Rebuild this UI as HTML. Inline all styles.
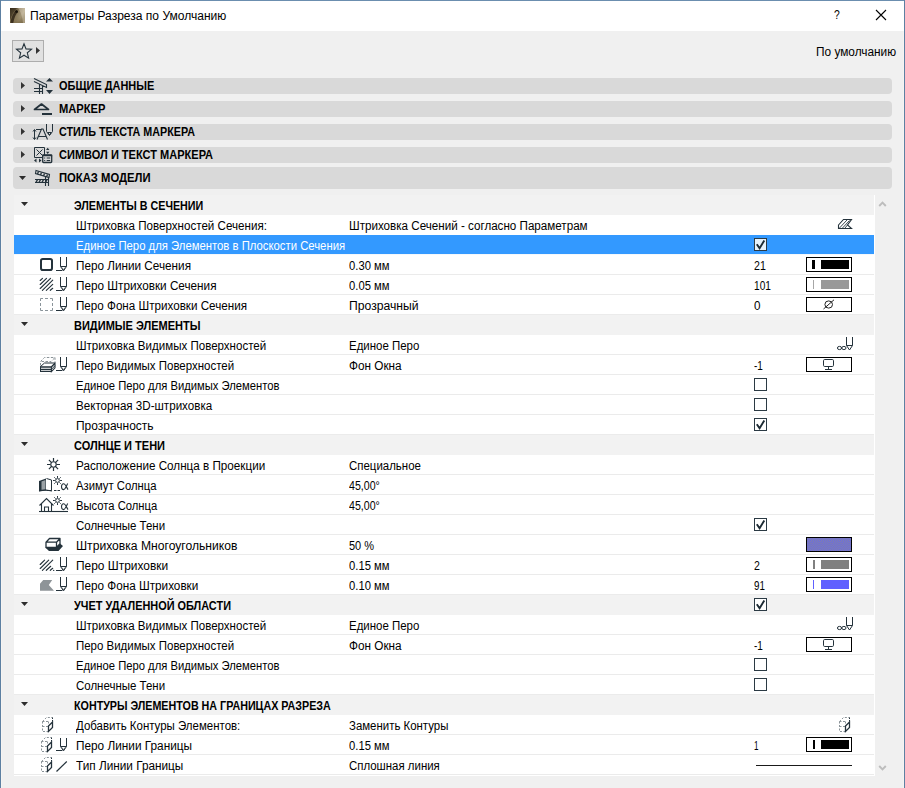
<!DOCTYPE html>
<html><head><meta charset="utf-8"><title>Параметры Разреза по Умолчанию</title>
<style>
*{box-sizing:border-box;margin:0;padding:0}
html,body{width:905px;height:788px;overflow:hidden;background:#f0f0f0}
body{font-family:"Liberation Sans",sans-serif;font-size:12px;line-height:14px;color:#000;position:relative}
.ab{position:absolute}
i{display:block;position:absolute;font-style:normal}
span,b{display:inline-block;white-space:nowrap;transform-origin:0 0}
#bt{position:absolute;left:0;top:0;width:905px;height:1px;background:#6b8eaf}
#bl{position:absolute;left:0;top:0;width:1px;height:788px;background:#5d80a2}
#br{position:absolute;left:904px;top:0;width:1px;height:788px;background:#5d80a2}
#title{position:absolute;left:1px;top:1px;width:903px;height:30px;background:#fff}
#title .t{position:absolute;left:29px;top:8px}
#appico{position:absolute;left:9px;top:7px;width:15px;height:15px}
#el,#er{position:absolute;top:31px;width:1px;height:757px;background:#f6f4f2}#el{left:1px}#er{left:903px}
#star{position:absolute;left:12px;top:40px;width:32px;height:22px;border:1px solid #adadad;background:#e1e1e1}
.def{position:absolute;left:816px;top:45px}
.sec{position:absolute;left:13px;width:879px;height:16px;background:#d9d9d9;border-radius:4px}
.sec b{position:absolute;left:46px;top:1px}
.sec b.b5{top:4px}
.sec svg{position:absolute;left:18px;top:-2px}
.tr{left:8px;top:4px;width:4px;height:7px;background:#333;clip-path:polygon(0 0,100% 50%,0 100%)}
.td{left:6px;top:9px;width:7px;height:4px;background:#2d2d2d;clip-path:polygon(0 0,100% 0,50% 100%)}
#list{position:absolute;left:14px;top:195px;width:861px;height:581px;background:#fff;overflow:hidden}
.row{position:relative;height:20px;width:860px;border-bottom:1px solid #ebebeb}
.row.grp{background:#f2f2f2;border-bottom-color:#f2f2f2}
.row.sel{background:#3399ff;color:#fff;border-bottom-color:#f4f8fc}
.lb{position:absolute;left:62px;top:4px}
.grp .lb{left:60px}
.vl{position:absolute;left:335px;top:4px}
.nm{position:absolute;left:740px;top:4px}
.tri{left:7px;top:7px;width:7px;height:4px;background:#2d2d2d;clip-path:polygon(0 0,100% 0,50% 100%)}
.chk{position:absolute;left:740px;top:3px;width:13px;height:13px;border:1px solid #2b3a44;background:#fff}
.sel .chk{background:#e5f1fb}
.chk svg{position:absolute;left:0;top:0}
.pen{position:absolute;left:792px;top:2px;width:46px;height:15px;border:1px solid #000;background:#fff}
.pen i{top:2px;height:9px}
.pen.fillsw{background:repeating-conic-gradient(#6a6ae0 0 25%,#8282aa 0 50%) 0 0/2px 2px}
.row.nb{border-bottom-color:#fff}
#sb{position:absolute;left:875px;top:195px;width:17px;height:581px;background:#f0f0f0}
</style></head><body>
<div id="title">
<svg id="appico" viewBox="0 0 15 15"><defs><linearGradient id="ag" x1="0" y1="0" x2="1" y2="0.600"><stop offset="0" stop-color="#3d321f"/><stop offset="0.450" stop-color="#7d6e50"/><stop offset="0.800" stop-color="#c4b89c"/><stop offset="1" stop-color="#a39679"/></linearGradient><linearGradient id="ah" x1="0" y1="0" x2="0" y2="1"><stop offset="0" stop-color="#8a7a5a" stop-opacity="0"/><stop offset="1" stop-color="#7a6a48" stop-opacity="0.900"/></linearGradient></defs><rect width="15" height="15" fill="url(#ag)"/><rect width="15" height="15" fill="url(#ah)"/><path d="M9 1.500C11 5 12.500 9 13 15H15V0H8Z" fill="#d9cfb8" opacity="0.450"/><path d="M0 0H7L3 5L0 12Z" fill="#2e2515" opacity="0.550"/><path d="M1.800 15C2.800 9.500 4.800 5 7.200 3" fill="none" stroke="#2a2114" stroke-width="2.800" opacity="0.800"/><circle cx="6.600" cy="3.600" r="1.400" fill="#120d07" opacity="0.900"/></svg>
<span class="t" style="transform:scaleX(1.0026);">Параметры Разреза по Умолчанию</span>
<span class="ab" style="left:833px;top:7px;font-size:13px;transform:scaleX(.8)">?</span>
<svg class="ab" style="left:874px;top:8px" width="12" height="12" viewBox="0 0 12 12"><path d="M1 1L11 11M11 1L1 11" stroke="#000" stroke-width="1.100" fill="none"/></svg>
</div>
<div id="el"></div><div id="er"></div><div id="bt"></div><div id="bl"></div><div id="br"></div>
<div id="star"><svg class="ab" style="left:2px;top:1px" width="18" height="18" viewBox="0 0 18 18"><path d="M9 1.800L11 6.900L16.500 7.300L12.300 10.800L13.600 16.100L9 13.200L4.400 16.100L5.700 10.800L1.500 7.300L7 6.900Z" fill="none" stroke="#24323b" stroke-width="1.100"/></svg><i class="tr" style="left:23px;top:6px"></i></div>
<span class="def" style="transform:scaleX(0.9870);">По умолчанию</span>

<div class="sec" style="top:78px"><i class="tr"></i>
<svg width="24" height="20" viewBox="0 0 24 20"><path d="M3 2.500L15.500 8.500V11.500L3 5.500M8.500 8.500V18M11.500 9.500V18M3 12.500H11.500M3 15.500H11.500" fill="none" stroke="#24323b" stroke-width="1.100"/><path d="M15 5.500L18.500 2L22 5.500ZM15 14L22 14L18.500 18Z" fill="#24323b"/></svg>
<b style="transform:scaleX(0.9124);">ОБЩИЕ ДАННЫЕ</b></div>
<div class="sec" style="top:101px"><i class="tr"></i>
<svg width="24" height="20" viewBox="0 0 24 20"><path d="M3.500 10.500L10.500 5L17.500 10.500Z" fill="none" stroke="#24323b" stroke-width="1.700" stroke-linejoin="round"/><path d="M11 15H21" stroke="#24323b" stroke-width="2"/></svg>
<b style="transform:scaleX(0.9300);">МАРКЕР</b></div>
<div class="sec" style="top:124px"><i class="tr"></i>
<svg width="24" height="20" viewBox="0 0 24 20"><g transform="translate(-1,0)"><path d="M4.500 8V17M3 9.500L4.500 7.500L6 9.500M3 15.500L4.500 17.500L6 15.500" fill="none" stroke="#24323b"/><path d="M7 17.500L11.500 7H13L17.500 17.500M8.500 14.500H16M6 7.500H11" fill="none" stroke="#24323b" stroke-width="1.100"/><path d="M16.500 2V9.500L19.500 13.500L22.500 9.500V2M17.800 10.500H21.200L19.500 13Z" fill="none" stroke="#24323b"/></g></svg>
<b style="transform:scaleX(0.8955);">СТИЛЬ ТЕКСТА МАРКЕРА</b></div>
<div class="sec" style="top:147px"><i class="tr"></i>
<svg width="24" height="20" viewBox="0 0 24 20"><path d="M3.500 2.500H13.500V12.500H3.500ZM5.500 4.500L11.500 10.500M11.500 4.500L5.500 10.500" fill="none" stroke="#24323b"/><path d="M15 5L16.700 2.800L18.400 5ZM15 6.800L18.400 6.800L16.700 9Z" fill="#24323b"/><path d="M3 15.500L5.500 13.500V17.500ZM10.500 15.500L8 13.500V17.500Z" fill="#24323b"/><rect x="11.700" y="10" width="9" height="7.500" rx="0.800" fill="#d9d9d9" stroke="#24323b" stroke-width="1.300"/><path d="M11.200 10.500H21.200" stroke="#24323b" stroke-width="1.500"/><path d="M13.200 13H14.200M15.700 13H19.200M13.200 15.500H14.200M15.700 15.500H19.200" stroke="#24323b" fill="none"/></svg>
<b style="transform:scaleX(0.9191);">СИМВОЛ И ТЕКСТ МАРКЕРА</b></div>
<div class="sec" style="top:167px;height:22px"><i class="td"></i>
<svg style="top:1px" width="24" height="20" viewBox="0 0 24 20"><path d="M5 2.500L18.500 6.500L18 9.500L4.500 5.500Z" fill="none" stroke="#24323b" stroke-width="1.100"/><path d="M7.500 3.500L6.500 6M10.500 4.500L9.500 7M13.500 5.500L12.500 8M16.500 6.500L15.500 9" stroke="#24323b" stroke-width="1.300"/><path d="M4 11.500H17.500M4 14.500H17.500M14.500 9V18M17.500 9.500V18" stroke="#24323b" stroke-width="1.100" fill="none"/><path d="M5 14L6.500 12M8 14L9.500 12M11 14L12.500 12M14.500 14L16 12" stroke="#24323b" stroke-width="1.300"/></svg>
<b class="b5" style="transform:scaleX(0.9377);">ПОКАЗ МОДЕЛИ</b></div>

<div id="list">
<div class="row grp"><i class="tri"></i><b class="lb" style="transform:scaleX(0.8941);">ЭЛЕМЕНТЫ В СЕЧЕНИИ</b></div>
<div class="row nb"><span class="lb" style="transform:scaleX(0.9667);">Штриховка Поверхностей Сечения:</span><span class="vl" style="transform:scaleX(0.9684);">Штриховка Сечений - согласно Параметрам</span><svg class="ab" style="left:822px;top:2px" width="18" height="14" viewBox="0 0 18 14"><path d="M2.500 8L7.500 2.500H15.500L11.500 8L15.500 11.500H2.500Z" fill="none" stroke="#24323b" stroke-width="1.100"/><path d="M3.500 11L11 3M6.500 11L13.500 3.500M11.500 8L9 11" stroke="#24323b" stroke-width="0.9" fill="none"/></svg></div>
<div class="row sel"><span class="lb" style="transform:scaleX(0.9427);">Единое Перо для Элементов в Плоскости Сечения</span><div class="chk"><svg width="11" height="11" viewBox="0 0 11 11"><path d="M1.800 5.200L4.600 9.200L9.300 1.500" fill="none" stroke="#1c2a33" stroke-width="1.900"/></svg></div></div>
<div class="row"><svg class="ab" style="left:0px;top:0" width="62" height="20" viewBox="0 0 62 20"><rect x="27" y="4" width="11" height="11" rx="1.8" fill="none" stroke="#24323b" stroke-width="2"/><path d="M46.5 2V11.500L49.5 15.900L52.5 11.500V2M46.5 11.500H52.5" fill="none" stroke="#24323b"/><path d="M48.0 12.500L49.5 15L51.0 12.500" fill="none" stroke="#24323b" stroke-width="0.600"/><path d="M42.0 15.500H48.3" stroke="#24323b"/></svg><span class="lb" style="transform:scaleX(0.9777);">Перо Линии Сечения</span><span class="vl" style="transform:scaleX(0.9374);">0.30 мм</span><span class="nm" style="transform:scaleX(0.8833);">21</span><div class="pen"><i style="left:5px;width:3px;background:#000"></i><i style="left:14px;width:28px;background:#000"></i></div></div>
<div class="row"><svg class="ab" style="left:0px;top:0" width="62" height="20" viewBox="0 0 62 20"><path d="M26.200 5.500L28.500 3.400M26.200 9.500L32.500 3.400M26.200 13.500L36.500 3.400M28.400 15.300L38.700 5.200M32.300 15.300L38.700 9.300M36.300 15.300L38.700 13.300" stroke="#24323b" stroke-width="1.150" stroke-linecap="round" fill="none"/><path d="M46.5 2V11.500L49.5 15.900L52.5 11.500V2M46.5 11.500H52.5" fill="none" stroke="#24323b"/><path d="M48.0 12.500L49.5 15L51.0 12.500" fill="none" stroke="#24323b" stroke-width="0.600"/><path d="M42.0 15.500H48.3" stroke="#24323b"/></svg><span class="lb" style="transform:scaleX(0.9774);">Перо Штриховки Сечения</span><span class="vl" style="transform:scaleX(0.9374);">0.05 мм</span><span class="nm" style="transform:scaleX(0.8437);">101</span><div class="pen"><i style="left:6px;width:1px;background:#a6a6a6"></i><i style="left:14px;width:28px;background:#999"></i></div></div>
<div class="row"><svg class="ab" style="left:0px;top:0" width="62" height="20" viewBox="0 0 62 20"><rect x="26.5" y="3.5" width="12" height="12" fill="none" stroke="#8a949a" stroke-dasharray="5 2 3 2" stroke-dashoffset="2.500"/><path d="M46.5 2V11.500L49.5 15.900L52.5 11.500V2M46.5 11.500H52.5" fill="none" stroke="#24323b"/><path d="M48.0 12.500L49.5 15L51.0 12.500" fill="none" stroke="#24323b" stroke-width="0.600"/><path d="M42.0 15.500H48.3" stroke="#24323b"/></svg><span class="lb" style="transform:scaleX(0.9706);">Перо Фона Штриховки Сечения</span><span class="vl" style="transform:scaleX(1.0140);">Прозрачный</span><span class="nm" style="transform:scaleX(0.9720);">0</span><div class="pen"><svg class="ab" style="left:15px;top:0" width="14" height="13" viewBox="0 0 14 13"><ellipse cx="6.700" cy="6.500" rx="3.800" ry="3.600" fill="none" stroke="#222"/><path d="M1.500 11L12 1.800" stroke="#222"/></svg></div></div>
<div class="row grp"><i class="tri"></i><b class="lb" style="transform:scaleX(0.9180);">ВИДИМЫЕ ЭЛЕМЕНТЫ</b></div>
<div class="row"><span class="lb" style="transform:scaleX(0.9620);">Штриховка Видимых Поверхностей</span><span class="vl" style="transform:scaleX(0.9542);">Единое Перо</span><svg class="ab" style="left:822px;top:0" width="18" height="20" viewBox="0 0 18 20"><path d="M10.500 2V10.500L13.500 15L16.500 10.500V2M10.500 10.500H16.500" fill="none" stroke="#24323b"/><ellipse cx="3.500" cy="13" rx="2.100" ry="1.600" fill="none" stroke="#24323b"/><ellipse cx="7.900" cy="13" rx="2.100" ry="1.600" fill="none" stroke="#24323b"/></svg></div>
<div class="row"><svg class="ab" style="left:0px;top:0" width="62" height="20" viewBox="0 0 62 20"><path d="M26.500 10.500V6.500L30.500 2.500H41V7.500M27.500 6.500H37L40.500 3M37 7.500V8" fill="none" stroke="#8a9398" stroke-dasharray="2.500 1.500"/><path d="M26.500 11.500L30.500 8H41L37.300 11.500" fill="none" stroke="#24323b"/><path d="M26 12H37.500M26 14.300H37.500M26 16.400H37.500" fill="none" stroke="#24323b" stroke-width="1.300"/><path d="M26.500 11.500V16.500" stroke="#24323b"/><path d="M37.400 12L41 8.300V12.800L37.400 16.600Z" fill="none" stroke="#24323b" stroke-width="1.100"/><path d="M37.500 14.300L41 10.600" stroke="#24323b"/><path d="M46.5 2V11.500L49.5 15.900L52.5 11.500V2M46.5 11.500H52.5" fill="none" stroke="#24323b"/><path d="M48.0 12.500L49.5 15L51.0 12.500" fill="none" stroke="#24323b" stroke-width="0.600"/><path d="M42.0 15.500H48.3" stroke="#24323b"/></svg><span class="lb" style="transform:scaleX(0.9558);">Перо Видимых Поверхностей</span><span class="vl" style="transform:scaleX(0.9803);">Фон Окна</span><span class="nm" style="transform:scaleX(0.8340);">-1</span><div class="pen"><svg class="ab" style="left:15px;top:0" width="14" height="13" viewBox="0 0 14 13"><rect x="1.500" y="1.500" width="10" height="7" rx="1.200" fill="none" stroke="#24323b"/><path d="M6.500 8.500V11.500M3 11.500H10" stroke="#24323b" fill="none"/></svg></div></div>
<div class="row"><span class="lb" style="transform:scaleX(0.9364);">Единое Перо для Видимых Элементов</span><div class="chk"></div></div>
<div class="row"><span class="lb" style="transform:scaleX(0.9670);">Векторная 3D-штриховка</span><div class="chk"></div></div>
<div class="row"><span class="lb" style="transform:scaleX(0.9970);">Прозрачность</span><div class="chk"><svg width="11" height="11" viewBox="0 0 11 11"><path d="M1.800 5.200L4.600 9.200L9.300 1.500" fill="none" stroke="#1c2a33" stroke-width="1.900"/></svg></div></div>
<div class="row grp"><i class="tri"></i><b class="lb" style="transform:scaleX(0.9175);">СОЛНЦЕ И ТЕНИ</b></div>
<div class="row"><svg class="ab" style="left:0px;top:0" width="62" height="20" viewBox="0 0 62 20"><circle cx="39.500" cy="9.500" r="2.700" fill="none" stroke="#24323b" stroke-width="1.1"/><path d="M39.500 3V6.500M39.500 12.500V16M33 9.500H36.500M42.500 9.500H46M34.900 4.900L37.300 7.300M41.700 11.700L44.100 14.100M44.100 4.900L41.700 7.300M34.900 14.100L37.300 11.700" stroke="#24323b" stroke-width="1.200" fill="none"/></svg><span class="lb" style="transform:scaleX(0.9734);">Расположение Солнца в Проекции</span><span class="vl" style="transform:scaleX(0.9545);">Специальное</span></div>
<div class="row"><svg class="ab" style="left:0px;top:0" width="62" height="20" viewBox="0 0 62 20"><path d="M25 6L32 3.500V15.500L25 16.200Z" fill="#24323b"/><path d="M27.500 6.500L31.500 5V14.500L27.500 14.800Z" fill="#9aa1a5"/><path d="M32.500 3.500L37.500 5V15.500L32.500 15.500" fill="#fff" stroke="#24323b"/><path d="M25 16L32 15L38 16" fill="none" stroke="#24323b" stroke-width="1.2"/><circle cx="43.5" cy="5.5" r="1.9" fill="#fff" stroke="#24323b"/><path d="M43.5 1.0V2.9M43.5 8.1V10.0M39.0 5.5H40.9M46.1 5.5H48.0M40.3 2.3L41.6 3.6M45.4 7.4L46.7 8.7M46.7 2.3L45.4 3.6M40.3 8.7L41.6 7.4" stroke="#24323b" fill="none"/><path d="M53.7 8.6C52.2 11.6 51.0 14.6 49.7 14.6C48.0 14.6 47.5 13.2 47.5 11.8C47.5 10.1 48.2 8.799999999999999 49.7 8.799999999999999C51.2 8.799999999999999 52.2 11.6 54.0 14.6" fill="none" stroke="#24323b" stroke-width="1.1"/><path d="M40 15.500H47" stroke="#24323b" stroke-dasharray="2.500 1" fill="none"/></svg><span class="lb" style="transform:scaleX(0.9395);">Азимут Солнца</span><span class="vl" style="transform:scaleX(0.8843);">45,00°</span></div>
<div class="row"><svg class="ab" style="left:0px;top:0" width="62" height="20" viewBox="0 0 62 20"><path d="M25.500 10.500L32.500 3.500L39.500 10.500M27.500 9V16.500M37.500 9V16.500M30.500 16.500V12H34.500V16.500" fill="none" stroke="#24323b" stroke-width="1.1"/><path d="M25 16.500H54" stroke="#24323b" stroke-width="1.1"/><circle cx="43.5" cy="5.5" r="1.9" fill="#fff" stroke="#24323b"/><path d="M43.5 1.0V2.9M43.5 8.1V10.0M39.0 5.5H40.9M46.1 5.5H48.0M40.3 2.3L41.6 3.6M45.4 7.4L46.7 8.7M46.7 2.3L45.4 3.6M40.3 8.7L41.6 7.4" stroke="#24323b" fill="none"/><path d="M53.7 8.6C52.2 11.6 51.0 14.6 49.7 14.6C48.0 14.6 47.5 13.2 47.5 11.8C47.5 10.1 48.2 8.799999999999999 49.7 8.799999999999999C51.2 8.799999999999999 52.2 11.6 54.0 14.6" fill="none" stroke="#24323b" stroke-width="1.1"/></svg><span class="lb" style="transform:scaleX(0.9355);">Высота Солнца</span><span class="vl" style="transform:scaleX(0.8843);">45,00°</span></div>
<div class="row"><span class="lb" style="transform:scaleX(0.9565);">Солнечные Тени</span><div class="chk"><svg width="11" height="11" viewBox="0 0 11 11"><path d="M1.800 5.200L4.600 9.200L9.300 1.500" fill="none" stroke="#1c2a33" stroke-width="1.900"/></svg></div></div>
<div class="row"><svg class="ab" style="left:0px;top:0" width="62" height="20" viewBox="0 0 62 20"><path d="M31.300 12.500L35 16H44.500L49 11L46 8.500L42.500 12.500Z" fill="#24323b"/><path d="M32 7.200H42.500V12.500H32ZM32 7.200L35.500 3.500H46L42.500 7.200M46 3.500V8.800L42.500 12.500" fill="#fff" stroke="#24323b" stroke-width="1.300" stroke-linejoin="round"/></svg><span class="lb" style="transform:scaleX(1.0100);">Штриховка Многоугольников</span><span class="vl" style="transform:scaleX(0.9174);">50 %</span><div class="pen fillsw"></div></div>
<div class="row"><svg class="ab" style="left:0px;top:0" width="62" height="20" viewBox="0 0 62 20"><path d="M26.200 9.500L30.600 5.200M26.200 13.500L34.700 5.200M28.400 15.300L38.700 5.200M32.300 15.300L36.700 11.300M36.300 15.300L38.700 13.300" stroke="#24323b" stroke-width="1.150" stroke-linecap="round" fill="none"/><circle cx="39.700" cy="15.400" r="0.650" fill="#24323b"/><path d="M46.5 2V11.500L49.5 15.900L52.5 11.500V2M46.5 11.500H52.5" fill="none" stroke="#24323b"/><path d="M48.0 12.500L49.5 15L51.0 12.500" fill="none" stroke="#24323b" stroke-width="0.600"/><path d="M42.0 15.500H48.3" stroke="#24323b"/></svg><span class="lb" style="transform:scaleX(0.9933);">Перо Штриховки</span><span class="vl" style="transform:scaleX(0.9374);">0.15 мм</span><span class="nm" style="transform:scaleX(0.8822);">2</span><div class="pen"><i style="left:6px;width:2px;background:#808080"></i><i style="left:14px;width:28px;background:#808080"></i></div></div>
<div class="row"><svg class="ab" style="left:0px;top:0" width="62" height="20" viewBox="0 0 62 20"><path d="M29.200 5H38.200L34.800 10L40 15.800H26V8.800Z" fill="#8e9498"/><path d="M46.5 2V11.500L49.5 15.900L52.5 11.500V2M46.5 11.500H52.5" fill="none" stroke="#24323b"/><path d="M48.0 12.500L49.5 15L51.0 12.500" fill="none" stroke="#24323b" stroke-width="0.600"/><path d="M42.0 15.500H48.3" stroke="#24323b"/></svg><span class="lb" style="transform:scaleX(0.9772);">Перо Фона Штриховки</span><span class="vl" style="transform:scaleX(0.9374);">0.10 мм</span><span class="nm" style="transform:scaleX(0.8159);">91</span><div class="pen"><i style="left:6px;width:1px;background:#6060ff"></i><i style="left:14px;width:28px;background:#6060ff"></i></div></div>
<div class="row grp"><i class="tri"></i><b class="lb" style="transform:scaleX(0.9096);">УЧЕТ УДАЛЕННОЙ ОБЛАСТИ</b><div class="chk"><svg width="11" height="11" viewBox="0 0 11 11"><path d="M1.800 5.200L4.600 9.200L9.300 1.500" fill="none" stroke="#1c2a33" stroke-width="1.900"/></svg></div></div>
<div class="row"><span class="lb" style="transform:scaleX(0.9620);">Штриховка Видимых Поверхностей</span><span class="vl" style="transform:scaleX(0.9542);">Единое Перо</span><svg class="ab" style="left:822px;top:0" width="18" height="20" viewBox="0 0 18 20"><path d="M10.500 2V10.500L13.500 15L16.500 10.500V2M10.500 10.500H16.500" fill="none" stroke="#24323b"/><ellipse cx="3.500" cy="13" rx="2.100" ry="1.600" fill="none" stroke="#24323b"/><ellipse cx="7.900" cy="13" rx="2.100" ry="1.600" fill="none" stroke="#24323b"/></svg></div>
<div class="row"><span class="lb" style="transform:scaleX(0.9558);">Перо Видимых Поверхностей</span><span class="vl" style="transform:scaleX(0.9803);">Фон Окна</span><span class="nm" style="transform:scaleX(0.8340);">-1</span><div class="pen"><svg class="ab" style="left:15px;top:0" width="14" height="13" viewBox="0 0 14 13"><rect x="1.500" y="1.500" width="10" height="7" rx="1.200" fill="none" stroke="#24323b"/><path d="M6.500 8.500V11.500M3 11.500H10" stroke="#24323b" fill="none"/></svg></div></div>
<div class="row"><span class="lb" style="transform:scaleX(0.9364);">Единое Перо для Видимых Элементов</span><div class="chk"></div></div>
<div class="row"><span class="lb" style="transform:scaleX(0.9565);">Солнечные Тени</span><div class="chk"></div></div>
<div class="row grp"><i class="tri"></i><b class="lb" style="transform:scaleX(0.8941);">КОНТУРЫ ЭЛЕМЕНТОВ НА ГРАНИЦАХ РАЗРЕЗА</b></div>
<div class="row"><svg class="ab" style="left:0px;top:0" width="62" height="20" viewBox="0 0 62 20"><g transform="translate(0,0)"><path d="M28.500 6.500L32.500 2.500H38.500M28.500 6.500V16.500H34.500M28.500 6.500H34.500M28.500 11.500H34.500M34.500 6.500V10" fill="none" stroke="#8a9398" stroke-dasharray="2 1.5"/><path d="M34.500 11L38.500 7V12.500L34.500 16.5Z" fill="none" stroke="#24323b" stroke-width="1.3"/><path d="M38.5 2.5V7" stroke="#24323b" stroke-dasharray="1.500 1" fill="none"/></g></svg><span class="lb" style="transform:scaleX(0.9553);">Добавить Контуры Элементов:</span><span class="vl" style="transform:scaleX(0.9526);">Заменить Контуры</span><svg class="ab" style="left:797px;top:0" width="62" height="20" viewBox="0 0 62 20"><g transform="translate(0,0)"><path d="M28.500 6.500L32.500 2.500H38.500M28.500 6.500V16.500H34.500M28.500 6.500H34.500M28.500 11.500H34.500M34.500 6.500V10" fill="none" stroke="#8a9398" stroke-dasharray="2 1.5"/><path d="M34.500 11L38.500 7V12.500L34.500 16.5Z" fill="none" stroke="#24323b" stroke-width="1.3"/><path d="M38.5 2.5V7" stroke="#24323b" stroke-dasharray="1.500 1" fill="none"/></g></svg></div>
<div class="row"><svg class="ab" style="left:0px;top:0" width="62" height="20" viewBox="0 0 62 20"><g transform="translate(-1,0)"><path d="M28.500 6.500L32.500 2.500H38.500M28.500 6.500V16.500H34.500M28.500 6.500H34.500M28.500 11.500H34.500M34.500 6.500V10" fill="none" stroke="#8a9398" stroke-dasharray="2 1.5"/><path d="M34.500 11L38.500 7V12.500L34.500 16.5Z" fill="none" stroke="#24323b" stroke-width="1.3"/><path d="M38.5 2.5V7" stroke="#24323b" stroke-dasharray="1.500 1" fill="none"/></g><path d="M46.5 3V11.500L49.5 15.900L52.5 11.500V3M46.5 11.500H52.5" fill="none" stroke="#24323b"/><path d="M48.0 12.500L49.5 15L51.0 12.500" fill="none" stroke="#24323b" stroke-width="0.600"/><path d="M42.0 15.500H48.3" stroke="#24323b"/></svg><span class="lb" style="transform:scaleX(0.9836);">Перо Линии Границы</span><span class="vl" style="transform:scaleX(0.9374);">0.15 мм</span><span class="nm" style="transform:scaleX(0.6729);">1</span><div class="pen"><i style="left:6px;width:2px;background:#000"></i><i style="left:14px;width:28px;background:#000"></i></div></div>
<div class="row"><svg class="ab" style="left:0px;top:0" width="62" height="20" viewBox="0 0 62 20"><g transform="translate(-1,0)"><path d="M28.500 6.500L32.500 2.500H38.500M28.500 6.500V16.500H34.500M28.500 6.500H34.500M28.500 11.500H34.500M34.500 6.500V10" fill="none" stroke="#8a9398" stroke-dasharray="2 1.5"/><path d="M34.500 11L38.500 7V12.500L34.500 16.5Z" fill="none" stroke="#24323b" stroke-width="1.3"/><path d="M38.5 2.5V7" stroke="#24323b" stroke-dasharray="1.500 1" fill="none"/></g><path d="M42.500 16.500L52.800 6.500" stroke="#24323b" stroke-width="1.200" fill="none"/></svg><span class="lb" style="transform:scaleX(0.9817);">Тип Линии Границы</span><span class="vl" style="transform:scaleX(0.9530);">Сплошная линия</span><div class="ab" style="left:742px;top:10px;width:96px;height:1px;background:#1a1a1a"></div></div>
</div>
<div id="sb">
<svg class="ab" style="left:3px;top:5px" width="9" height="8" viewBox="0 0 9 8"><path d="M1.200 6L4.500 2.600L7.800 6" fill="none" stroke="#bdbdbd" stroke-width="1.900"/></svg>
<svg class="ab" style="left:3px;top:569px" width="9" height="8" viewBox="0 0 9 8"><path d="M1.200 2L4.500 5.400L7.800 2" fill="none" stroke="#bdbdbd" stroke-width="1.900"/></svg>
</div>
</body></html>
